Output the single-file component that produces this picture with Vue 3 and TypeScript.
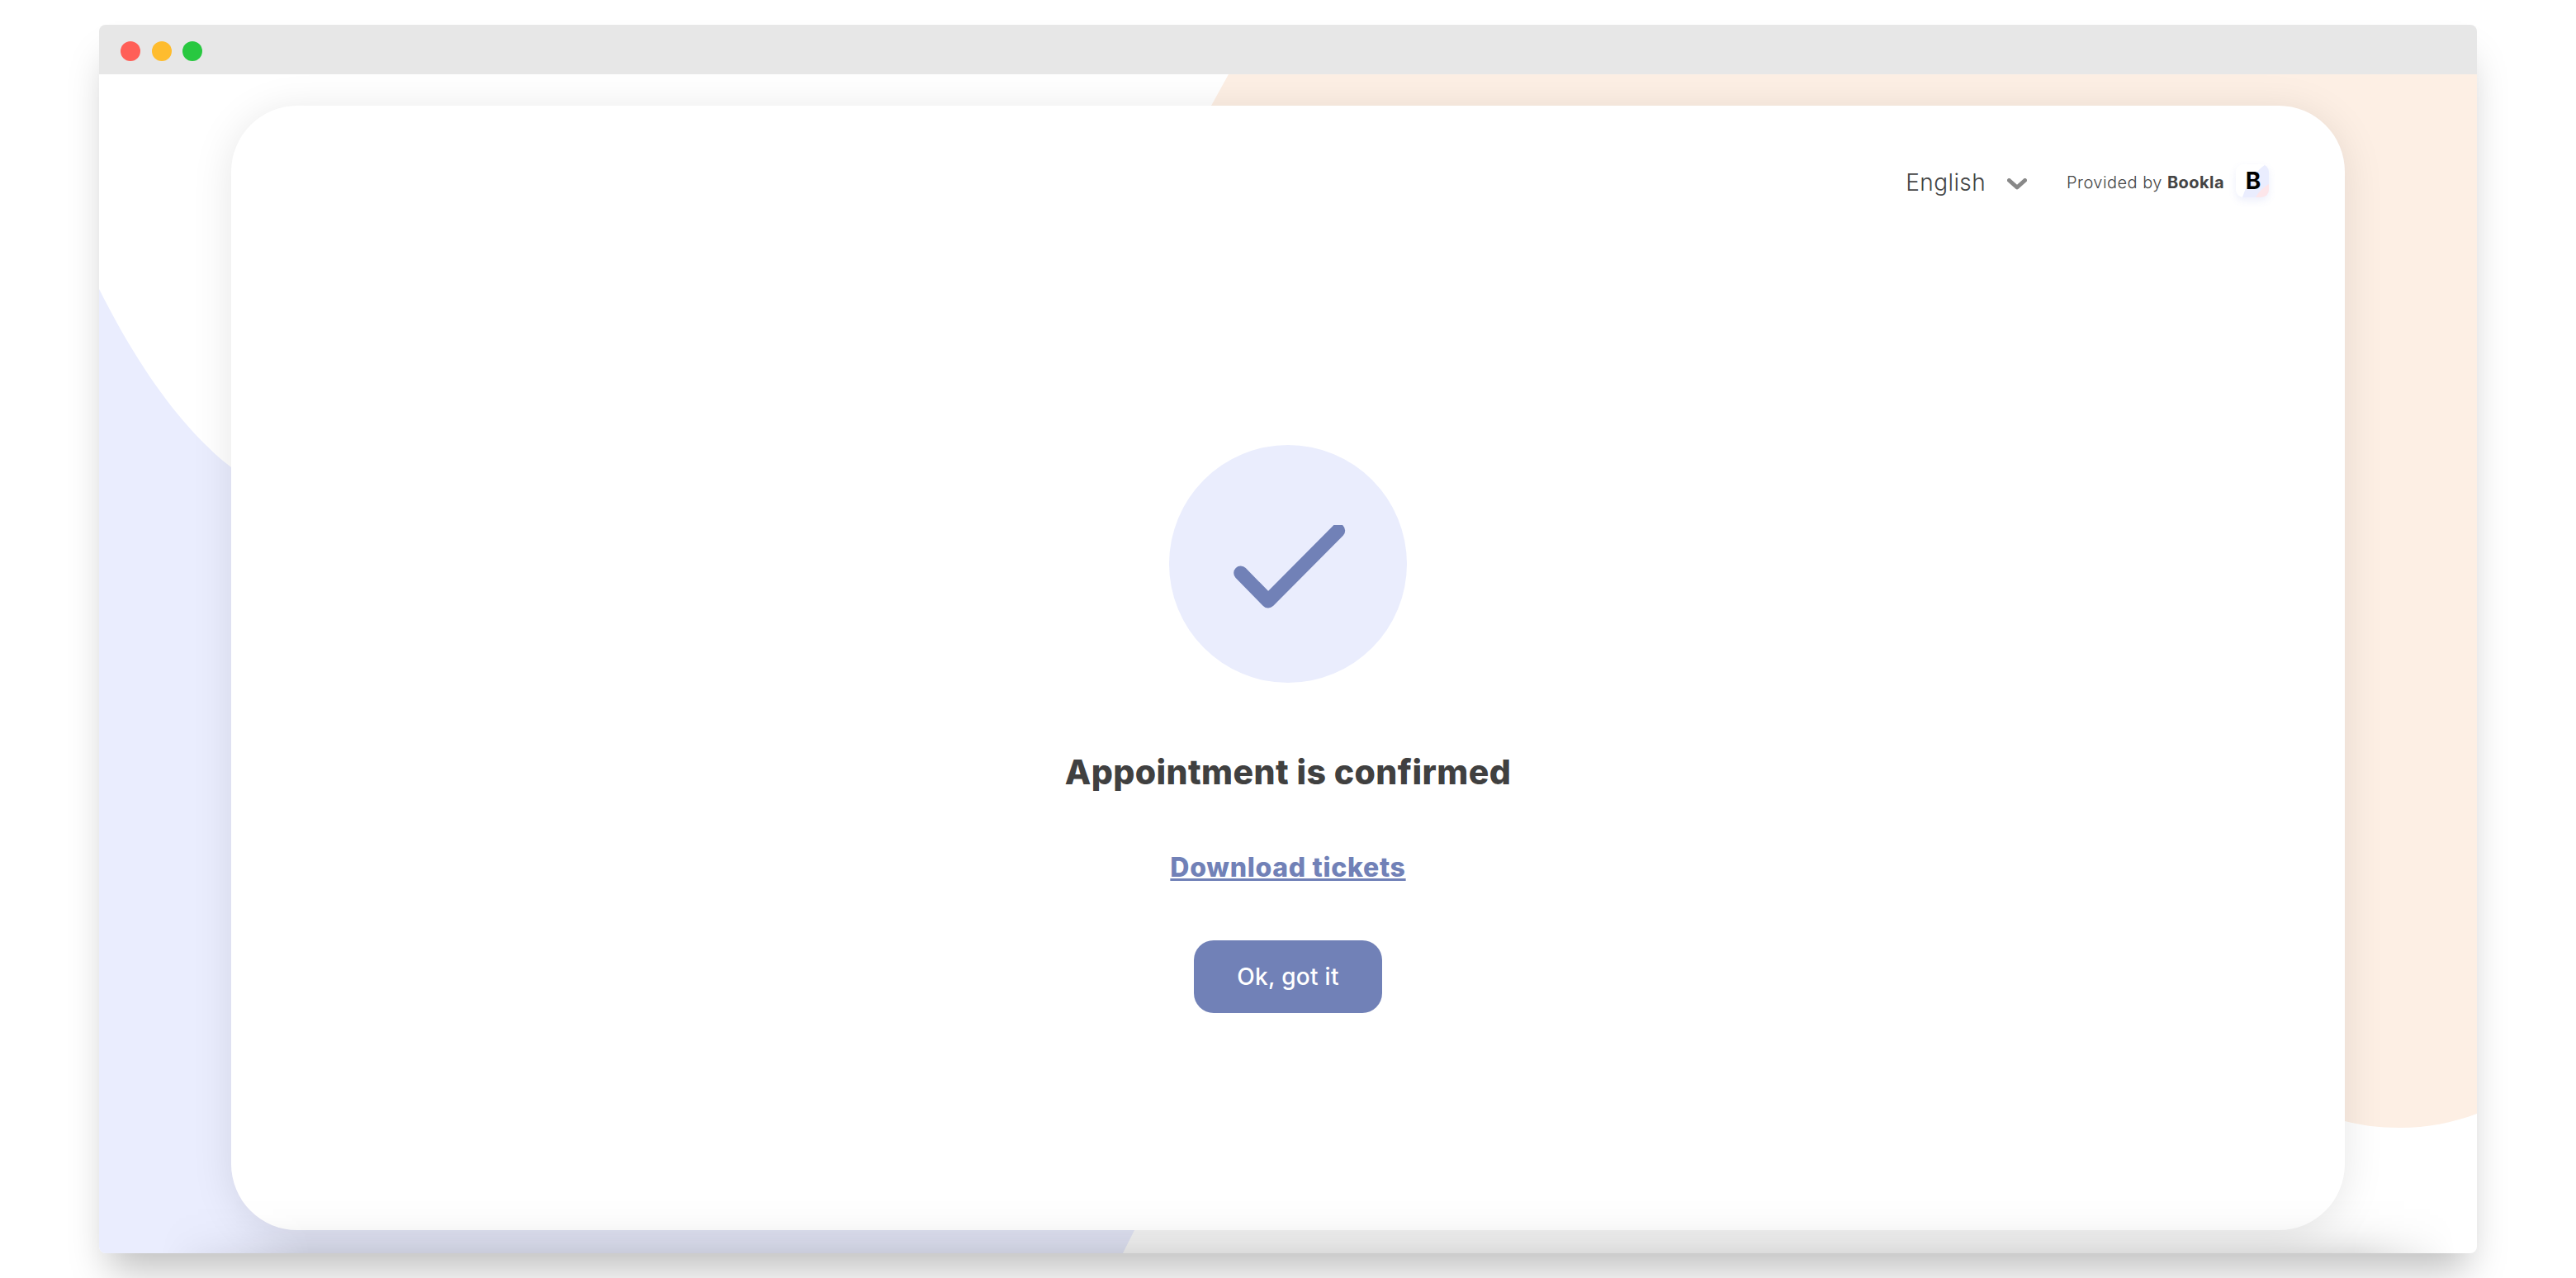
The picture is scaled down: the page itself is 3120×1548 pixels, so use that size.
<script setup lang="ts">
const dots = ['#ff5f57', '#febc2e', '#28c840']
</script>

<template>
  <div class="page">
    <div class="window">
      <div class="titlebar">
        <span v-for="c in dots" :key="c" class="dot" :style="{ background: c }"></span>
      </div>
      <div class="content">
        <svg class="blobs" viewBox="0 0 2880 1428" width="2880" height="1428">
          <path d="M0 260C45 350 100 430 160 476L1404 1100L1240 1428L0 1428Z" fill="#eaedfe" />
          <path d="M1368 0L2880 0L2880 1259C2850 1270 2820 1276 2787 1276C2760 1276 2740 1273 2720 1268L2000 800L1300 123Z" fill="#fdefe4" />
        </svg>
        <div class="card">
          <div class="topbar">
            <div class="lang">
              <span>English</span>
              <svg class="chevron" width="24" height="14" viewBox="0 0 24 14">
                <path d="M2.5 2.5L12 11L21.500 2.5" fill="none" stroke="#888" stroke-width="5" stroke-linecap="round" stroke-linejoin="round" />
              </svg>
            </div>
            <div class="provided">Provided by <b>Bookla</b></div>
            <div class="logo">
              <svg width="40" height="40" viewBox="0 0 40 40">
                <path d="M36 0L40 0L40 40L8 40C12 26 22 10 36 0Z" fill="#eaedfe" />
                <path d="M40 24L40 40L24 40C28 33 33 28 40 24Z" fill="#fde6ea" />
              </svg>
              <span class="logo-b">B</span>
            </div>
          </div>
          <div class="body">
            <div class="circle">
              <svg width="144" height="120" viewBox="0 0 144 120">
                <path d="M14.700 58L48 92L132.700 6.700" fill="none" stroke="#7181b7" stroke-width="17" stroke-linecap="round" stroke-linejoin="round" />
              </svg>
            </div>
            <h1 class="title">Appointment is confirmed</h1>
            <a class="tickets" href="#">Download tickets</a>
            <button class="ok">Ok, got it</button>
          </div>
        </div>
        <div class="bottom-shade"></div>
      </div>
    </div>
  </div>
</template>

<style>
html, body { margin: 0; background: #fff; }
</style>

<style scoped>
.page {
  width: 3120px;
  height: 1548px;
  padding: 30px 120px;
  box-sizing: border-box;
  overflow: hidden;
  font-family: Inter, "Noto Sans", sans-serif;
}
.window {
  height: 1488px;
  display: flex;
  flex-direction: column;
  border-radius: 8px;
  background: #fff;
  box-shadow: 0 32px 44px -12px rgba(0, 0, 0, 0.25);
}
.titlebar {
  height: 60px;
  box-sizing: border-box;
  flex: none;
  display: flex;
  align-items: center;
  gap: 13.5px;
  padding: 4px 0 0 26px;
  background: #e7e7e7;
  border-radius: 8px 8px 0 0;
}
.dot { width: 24px; height: 24px; border-radius: 50%; }

.content {
  position: relative;
  flex: 1;
  overflow: hidden;
  padding: 38px 160px 28px;
  border-radius: 0 0 8px 8px;
}
.blobs { position: absolute; left: 0; top: 0; }
/* the soft band along the window's bottom edge, it also greys the card a little */
.bottom-shade {
  position: absolute;
  left: 0;
  right: 0;
  bottom: 0;
  height: 68px;
  background: linear-gradient(to top, rgba(0, 0, 0, 0.125), rgba(0, 0, 0, 0.07) 20%, rgba(0, 0, 0, 0.03) 41%, rgba(0, 0, 0, 0.006) 70%, transparent);
  -webkit-mask-image: linear-gradient(to right, transparent 2.6%, #000 8.9%, #000 94.8%, transparent 99.1%);
  mask-image: linear-gradient(to right, transparent 2.6%, #000 8.9%, #000 94.8%, transparent 99.1%);
  pointer-events: none;
}

.card {
  position: relative;
  height: 1362px;
  background: #fff;
  border-radius: 80px;
  box-shadow: 0 6px 50px rgba(0, 0, 0, 0.1);
}
.topbar {
  display: flex;
  justify-content: flex-end;
  align-items: center;
  padding: 71px 92px 0 0;
  color: #444;
}
.lang {
  display: flex;
  align-items: center;
  gap: 26px;
  font-size: 28px;
  font-weight: 300;
  letter-spacing: 0.4px;
  margin-right: 48px;
  padding-top: 4px;
}
.chevron { margin-top: 4px; }
.provided {
  font-size: 20px;
  font-weight: 300;
  letter-spacing: 0.45px;
  margin-right: 14px;
  padding-top: 4px;
}
.provided b { font-weight: 700; }
.logo {
  position: relative;
  width: 40px;
  height: 40px;
  border-radius: 9px;
  overflow: hidden;
  background: #fff;
  box-shadow: 0 4px 10px rgba(110, 120, 220, 0.12);
}
.logo svg { display: block; }
.logo-b {
  position: absolute;
  inset: 0;
  padding-left: 2px;
  display: flex;
  align-items: center;
  justify-content: center;
  font-size: 28px;
  font-weight: 700;
  color: #000;
}

.body {
  display: flex;
  flex-direction: column;
  align-items: center;
  padding-top: 300px;
}
.circle {
  width: 288px;
  height: 288px;
  border-radius: 50%;
  background: #eaedfd;
  display: flex;
  align-items: center;
  justify-content: center;
}
.circle svg { margin-top: 26px; }
.title {
  margin: 80px 0 0;
  font-size: 41px;
  line-height: 56px;
  font-weight: 800;
  letter-spacing: 0.4px;
  color: #404040;
}
.tickets {
  margin-top: 66px;
  font-size: 32px;
  line-height: 44px;
  font-weight: 800;
  letter-spacing: 0.7px;
  color: #7181b7;
  text-decoration-thickness: 3px;
}
.ok {
  margin-top: 66px;
  width: 228px;
  height: 88px;
  border: none;
  border-radius: 24px;
  background: #7181b7;
  color: #fff;
  font-family: inherit;
  font-size: 28px;
  font-weight: 500;
  letter-spacing: 0.3px;
}
</style>
